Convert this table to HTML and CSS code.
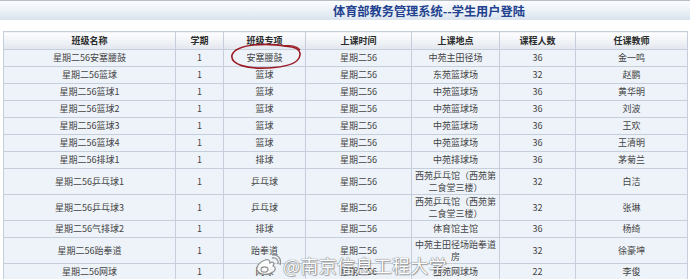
FILE: index.html
```html
<!DOCTYPE html>
<html lang="zh">
<head>
<meta charset="utf-8">
<title>体育部教务管理系统</title>
<link rel="stylesheet" href="styles.css">
</head>
<body>
<div class="page">
  <header class="topbar">
    <h1 class="title">体育部教务管理系统--学生用户登陆</h1>
  </header>
  <div class="table-wrap">
    <table class="grid">
      <colgroup>
        <col class="c1"><col class="c2"><col class="c3"><col class="c4"><col class="c5"><col class="c6"><col class="c7">
      </colgroup>
      <thead>
        <tr><th>班级名称</th><th>学期</th><th>班级专项</th><th>上课时间</th><th>上课地点</th><th>课程人数</th><th>任课教师</th></tr>
      </thead>
      <tbody>
        <tr><td>星期二56安塞腰鼓</td><td>1</td><td>安塞腰鼓</td><td>星期二56</td><td>中苑主田径场</td><td>36</td><td>金一鸣</td></tr>
        <tr><td>星期二56篮球</td><td>1</td><td>篮球</td><td>星期二56</td><td>东苑篮球场</td><td>32</td><td>赵鹏</td></tr>
        <tr><td>星期二56篮球1</td><td>1</td><td>篮球</td><td>星期二56</td><td>中苑篮球场</td><td>36</td><td>黄华明</td></tr>
        <tr><td>星期二56篮球2</td><td>1</td><td>篮球</td><td>星期二56</td><td>中苑篮球场</td><td>36</td><td>刘波</td></tr>
        <tr><td>星期二56篮球3</td><td>1</td><td>篮球</td><td>星期二56</td><td>中苑篮球场</td><td>36</td><td>王欢</td></tr>
        <tr><td>星期二56篮球4</td><td>1</td><td>篮球</td><td>星期二56</td><td>中苑篮球场</td><td>36</td><td>王清明</td></tr>
        <tr><td>星期二56排球1</td><td>1</td><td>排球</td><td>星期二56</td><td>中苑排球场</td><td>36</td><td>茅菊兰</td></tr>
        <tr class="tall"><td>星期二56乒乓球1</td><td>1</td><td>乒乓球</td><td>星期二56</td><td>西苑乒乓馆（西苑第<br>二食堂三楼）</td><td>32</td><td>白洁</td></tr>
        <tr class="tall"><td>星期二56乒乓球3</td><td>1</td><td>乒乓球</td><td>星期二56</td><td>西苑乒乓馆（西苑第<br>二食堂三楼）</td><td>32</td><td>张琳</td></tr>
        <tr><td>星期二56气排球2</td><td>1</td><td>排球</td><td>星期二56</td><td>体育馆主馆</td><td>36</td><td>杨绮</td></tr>
        <tr class="tall"><td>星期二56跆拳道</td><td>1</td><td>跆拳道</td><td>星期二56</td><td>中苑主田径场跆拳道<br>房</td><td>32</td><td>徐豪坤</td></tr>
        <tr><td>星期二56网球</td><td>1</td><td>网球</td><td>星期二56</td><td>西苑网球场</td><td>22</td><td>李俊</td></tr>
      </tbody>
    </table>
  </div>

  <svg class="mark" width="80" height="34" viewBox="0 0 80 34">
    <path d="M6 17 C 10 6, 40 4, 66 9 C 72 10, 76 14, 73 20 C 70 26, 60 29, 42 30 C 22 31, 4 27, 6 17 Z" fill="none" stroke="#9b1c24" stroke-width="1.6"/>
    <path d="M58 8 C 64 7, 71 8, 74 12" fill="none" stroke="#9b1c24" stroke-width="1.3"/>
  </svg>

  <div class="watermark">
    <svg class="wb" width="26" height="22" viewBox="0 0 26 22">
      <path d="M10 6 C 4 8, 1 13, 2 16 C 4 21, 13 22, 18 18 C 21 16, 21 13, 18 12 C 20 9, 18 7, 15 9 C 15 6, 13 5, 10 6 Z" fill="#fff" stroke="#8a8a8a" stroke-width="1.3"/>
      <ellipse cx="9.5" cy="15.5" rx="3.5" ry="2.6" fill="none" stroke="#8a8a8a" stroke-width="1.1"/>
      <path d="M17 4 C 21 3, 24 6, 23 10" fill="none" stroke="#8a8a8a" stroke-width="1.3"/>
      <path d="M17 1 C 23 0, 27 5, 25 11" fill="none" stroke="#8a8a8a" stroke-width="1.3"/>
    </svg>
    <span class="wm-text">@南京信息工程大学</span>
  </div>
</div>
</body>
</html>
```

FILE: styles.css
```css
html, body {
  margin: 0;
  padding: 0;
  background: #ffffff;
}

.page {
  position: relative;
  width: 690px;
  height: 279px;
  overflow: hidden;
  font-family: "Noto Sans CJK SC", "Noto Sans", sans-serif;
  color: #333333;
}

.topbar {
  height: 20px;
  box-sizing: border-box;
  border-top: 1px solid #b9bec6;
  background: linear-gradient(to bottom, #fbfcfe 0%, #eef3f8 45%, #d9e3ee 100%);
  display: flex;
  align-items: center;
  padding-left: 333px;
}

.title {
  margin: 0;
  font-size: 12.2px;
  font-weight: bold;
  color: #22418f;
  line-height: 16px;
}

.table-wrap {
  padding: 11px 0 0 3px;
}

.grid {
  border-collapse: collapse;
  table-layout: fixed;
  width: 684px;
  font-size: 9px;
  line-height: 12px;
}

.c1 { width: 172px; }
.c2 { width: 48px; }
.c3 { width: 82px; }
.c4 { width: 106px; }
.c5 { width: 88px; }
.c6 { width: 76px; }
.c7 { width: 112px; }

.grid th,
.grid td {
  border: 1px solid #c6cedb;
  text-align: center;
  vertical-align: middle;
  padding: 0 1px;
  overflow: hidden;
  white-space: nowrap;
}

.grid th {
  height: 17px;
  font-weight: bold;
  color: #2b2b2b;
  background: linear-gradient(to bottom, #fdfdfe 0%, #eef1f5 60%, #e2e7ee 100%);
}

.grid td {
  height: 16px;
  background: #eef3fa;
  color: #444444;
}

.grid tr.tall td {
  height: 25px;
  line-height: 12px;
}

.mark {
  position: absolute;
  left: 226px;
  top: 38px;
}

.watermark {
  position: absolute;
  left: 255px;
  top: 253px;
  display: flex;
  align-items: center;
  gap: 2px;
  opacity: 0.9;
}

.wm-text {
  font-size: 18px;
  line-height: 24px;
  color: #ffffff;
  letter-spacing: 0.3px;
  text-shadow: 0 0 1px #6d6d6d, 0 0 1px #6d6d6d, 1px 1px 1px rgba(0,0,0,0.35);
}
```
